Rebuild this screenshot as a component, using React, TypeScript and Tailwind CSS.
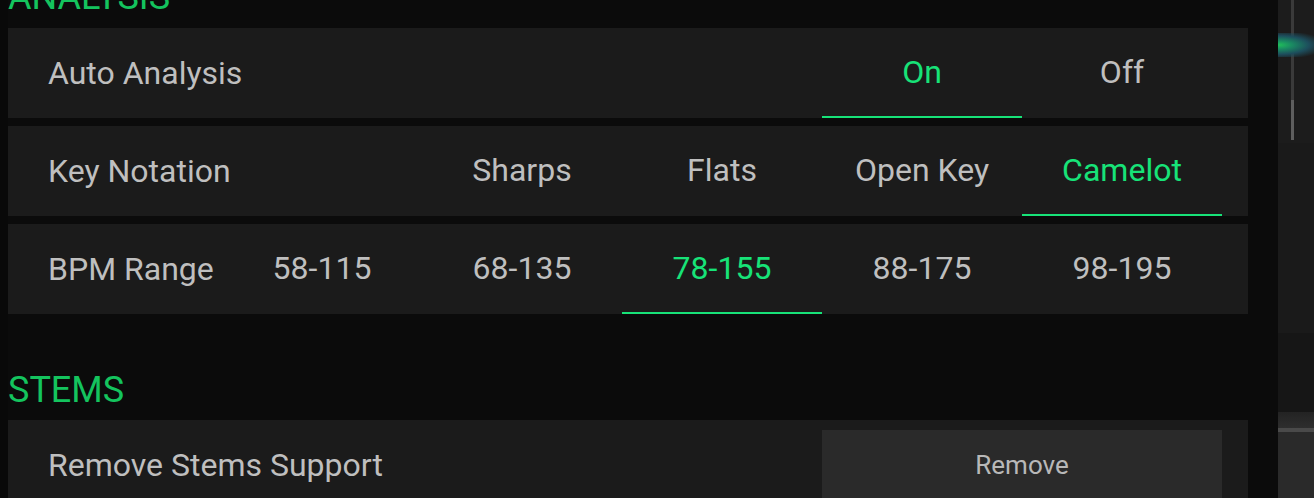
import React from 'react';

type Row = {
  label: string;
  options: (string | null)[];
  active: number;
};

const rows: Row[] = [
  { label: 'Auto Analysis', options: [null, null, null, 'On', 'Off'], active: 3 },
  { label: 'Key Notation', options: [null, 'Sharps', 'Flats', 'Open Key', 'Camelot'], active: 4 },
  { label: 'BPM Range', options: ['58-115', '68-135', '78-155', '88-175', '98-195'], active: 2 },
];

const SectionTitle: React.FC<{ children: React.ReactNode; className?: string }> = ({ children, className }) => (
  <h2 className={`text-[36px] leading-[36px] text-[#14c45e] font-normal whitespace-nowrap ${className ?? ''}`}>{children}</h2>
);

const OptionRow: React.FC<{ row: Row }> = ({ row }) => (
  <div className="flex h-[90px] bg-[#1b1b1b] pr-[26px]">
    <div className="w-[214px] shrink-0 pl-10 flex items-center whitespace-nowrap text-[#bfbfbf]">{row.label}</div>
    {row.options.map((opt, i) => (
      <div
        key={i}
        className={`w-[200px] shrink-0 flex items-center justify-center whitespace-nowrap border-b-2 ${
          opt && i === row.active ? 'border-[#17e378] text-[#17e378]' : 'border-transparent text-[#bfbfbf]'
        }`}
      >
        {opt}
      </div>
    ))}
  </div>
);

// narrow strip of the deck / waveform view on the right
const SidePanel: React.FC = () => (
  <div className="w-[36px] flex flex-col bg-[#1a1a1a]">
    <div className="relative h-[143px] bg-[#1c1c1c] overflow-hidden">
      <div className="absolute left-[13px] top-0 w-[3px] h-[100px] bg-[#3a3a3a]" />
      <div className="absolute left-[13px] top-[100px] w-[3px] h-[40px] bg-[#5e5e5e]" />
      <div className="absolute left-0 top-[33px] w-[40px] h-[24px] bg-[radial-gradient(ellipse_at_left,_#20c05a_0%,_#1a8a62_25%,_#1d4d5c_55%,_transparent_85%)]" />
    </div>
    <div className="h-[190px] bg-[#1a1a1a]" />
    <div className="h-[79px] bg-[#161616]" />
    <div className="h-[16px] bg-gradient-to-b from-[#232323] to-[#2e2e2e]" />
    <div className="h-[4px] bg-[#4a4a4a]" />
    <div className="flex-1 bg-[#2a2a2a]" />
  </div>
);

export default function App() {
  return (
    <div
      className="w-[1314px] h-[498px] overflow-hidden flex bg-[#0b0b0b]"
      style={{ fontFamily: 'Roboto, "Liberation Sans", sans-serif' }}
    >
      <div className="w-[8px] bg-[#090909]" />
      <div className="w-[1240px] -mt-[21px] text-[32px]">
        <SectionTitle className="mb-[13px]">ANALYSIS</SectionTitle>
        <div className="flex flex-col gap-2">
          {rows.map((r) => (
            <OptionRow key={r.label} row={r} />
          ))}
        </div>
        <SectionTitle className="mt-[58px] mb-3">STEMS</SectionTitle>
        <div className="flex h-[90px] bg-[#1b1b1b] pr-[26px] pt-[10px]">
          <div className="flex-1 pl-10 flex items-center whitespace-nowrap text-[#bfbfbf] -mt-[10px]">Remove Stems Support</div>
          <button className="w-[400px] h-[70px] bg-[#2a2a2a] text-[#b8b8b8] text-[26px]">Remove</button>
        </div>
      </div>
      <div className="w-[30px]" />
      <SidePanel />
    </div>
  );
}
